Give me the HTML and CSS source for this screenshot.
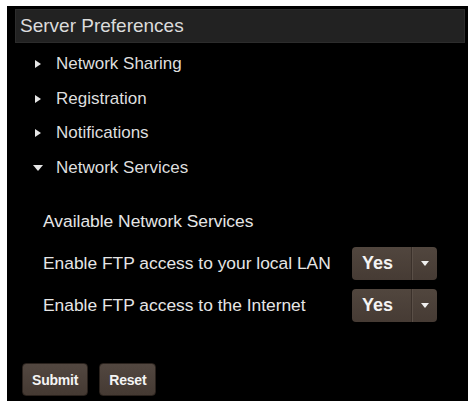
FILE: index.html
```html
<!DOCTYPE html>
<html>
<head>
<meta charset="utf-8">
<link rel="stylesheet" href="styles.css">
</head>
<body>
<div class="panel">
  <div class="header">Server Preferences</div>
  <ul class="menu">
    <li class="item"><span class="tri-right"></span>Network Sharing</li>
    <li class="item"><span class="tri-right"></span>Registration</li>
    <li class="item"><span class="tri-right"></span>Notifications</li>
    <li class="item"><span class="tri-down"></span>Network Services</li>
  </ul>
  <div class="section">
    <div class="row">Available Network Services</div>
    <div class="row">
      <span class="label">Enable FTP access to your local LAN</span>
      <div class="select"><span class="val">Yes</span><span class="arrow"><span class="tri-small"></span></span></div>
    </div>
    <div class="row">
      <span class="label">Enable FTP access to the Internet</span>
      <div class="select"><span class="val">Yes</span><span class="arrow"><span class="tri-small"></span></span></div>
    </div>
  </div>
  <div class="buttons">
    <button class="btn">Submit</button>
    <button class="btn">Reset</button>
  </div>
</div>
</body>
</html>
```
FILE: styles.css
```css
html, body {
  margin: 0;
  padding: 0;
  background: #ffffff;
}
body {
  font-family: "Liberation Sans", Arial, sans-serif;
  padding: 6px 0 0 7px;
  overflow: hidden;
  height: 401px;
  box-sizing: border-box;
}
.panel {
  width: 461px;
  height: 395px;
  background: #000;
  padding: 3px 3px 0 8px;
  box-sizing: border-box;
}
.header {
  height: 34px;
  box-sizing: border-box;
  background: #222222;
  border: 1px solid #2c2c2c;
  color: #dcdcdc;
  font-size: 19px;
  line-height: 32px;
  padding-left: 4px;
}
.menu {
  list-style: none;
  margin: 4px 0 0 0;
  padding: 0;
}
.item {
  height: 34.5px;
  display: flex;
  align-items: center;
  color: #dedede;
  font-size: 17px;
  padding-left: 20px;
}
.tri-right {
  width: 0;
  height: 0;
  border-top: 4px solid transparent;
  border-bottom: 4px solid transparent;
  border-left: 6px solid #e6e6e6;
  margin-right: 15px;
}
.tri-down {
  width: 0;
  height: 0;
  border-left: 5px solid transparent;
  border-right: 5px solid transparent;
  border-top: 6px solid #e6e6e6;
  margin-left: -2px;
  margin-right: 13px;
}
.section {
  margin-top: 15px;
  padding-left: 28px;
}
.row {
  height: 42px;
  display: flex;
  align-items: center;
  color: #e6e6e6;
  font-size: 17.4px;
}
.label {
  width: 309px;
}
.select {
  width: 85px;
  height: 33px;
  box-sizing: border-box;
  border-radius: 4px;
  background: linear-gradient(#51463e, #463b34);
  display: flex;
  align-items: center;
  color: #f4f4f4;
  font-weight: bold;
  font-size: 18px;
}
.val {
  width: 60px;
  padding-left: 10px;
  box-sizing: border-box;
  line-height: 33px;
  border-right: 1px solid #3a302a;
}
.arrow {
  flex: 1;
  height: 33px;
  border-left: 1px solid #5a4f47;
  display: flex;
  align-items: center;
  justify-content: center;
}
.tri-small {
  width: 0;
  height: 0;
  border-left: 4px solid transparent;
  border-right: 4px solid transparent;
  border-top: 5px solid #f0f0f0;
}
.buttons {
  margin-top: 37px;
  display: flex;
  gap: 11px;
  padding-left: 7px;
}
.btn {
  height: 33px;
  padding: 0 9px;
  border: 1px solid #2a221d;
  border-radius: 4px;
  background: linear-gradient(#524740, #453a33);
  color: #f4f4f4;
  font-family: "Liberation Sans", Arial, sans-serif;
  font-weight: bold;
  font-size: 14px;
  letter-spacing: -0.2px;
}
```
